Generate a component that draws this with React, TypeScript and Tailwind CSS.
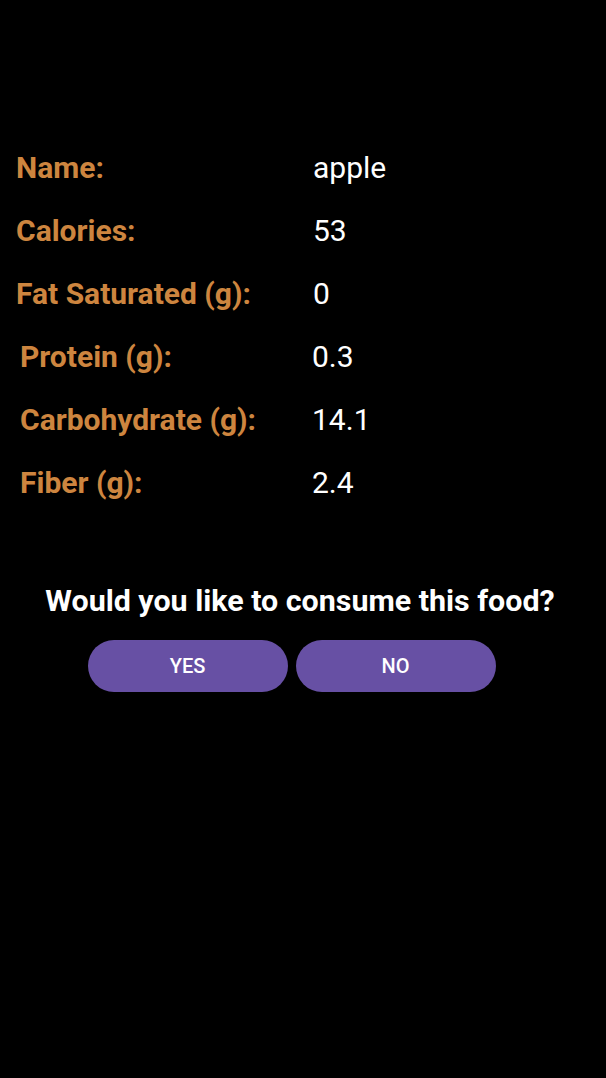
const groupOne = [
  { label: 'Name:', value: 'apple' },
  { label: 'Calories:', value: '53' },
  { label: 'Fat Saturated (g):', value: '0' },
]

const groupTwo = [
  { label: 'Protein (g):', value: '0.3' },
  { label: 'Carbohydrate (g):', value: '14.1' },
  { label: 'Fiber (g):', value: '2.4' },
]

function Row({ label, value, labelWidth }: { label: string; value: string; labelWidth: string }) {
  return (
    <div className="flex items-center h-[63px]">
      <span className={`${labelWidth} shrink-0 font-bold text-[30px] text-[#cd853f]`}>{label}</span>
      <span className="text-[30px] text-white">{value}</span>
    </div>
  )
}

export default function App() {
  return (
    <div className="w-full min-h-[1078px] bg-black font-['Roboto',sans-serif]">
      <div className="pt-[136px]">
        <div className="pl-4">
          {groupOne.map((r) => (
            <Row key={r.label} label={r.label} value={r.value} labelWidth="w-[297px]" />
          ))}
        </div>
        <div className="pl-5">
          {groupTwo.map((r) => (
            <Row key={r.label} label={r.label} value={r.value} labelWidth="w-[292px]" />
          ))}
        </div>
      </div>
      <div className="mt-[66px] flex flex-col items-center">
        <h2 className="text-[30.4px] font-bold text-white leading-[42px] pr-[6px]">Would you like to consume this food?</h2>
        <div className="mt-[18px] flex gap-2 pr-[23px]">
          <button className="w-[200px] h-[52px] rounded-full bg-[#6750a4] text-white text-[20px] font-medium uppercase">
            Yes
          </button>
          <button className="w-[200px] h-[52px] rounded-full bg-[#6750a4] text-white text-[20px] font-medium uppercase">
            No
          </button>
        </div>
      </div>
    </div>
  )
}
